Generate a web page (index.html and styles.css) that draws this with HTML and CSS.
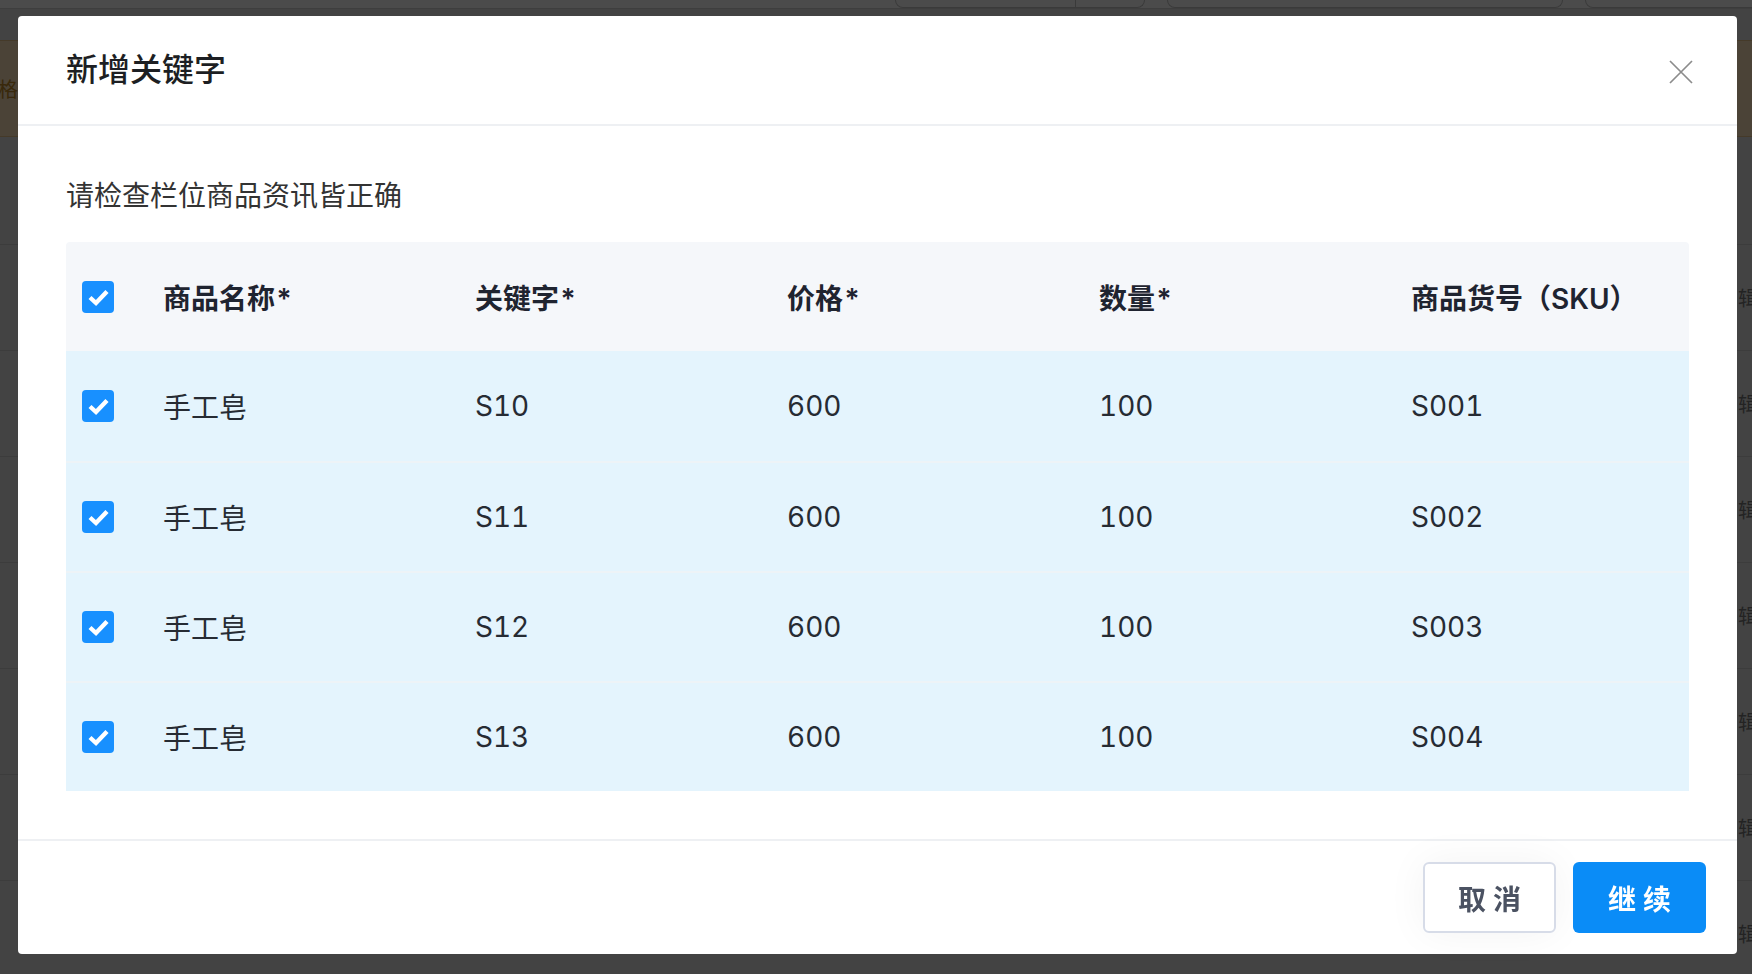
FILE: index.html
```html
<!DOCTYPE html>
<html lang="zh-CN">
<head>
<meta charset="utf-8">
<title>新增关键字</title>
<link rel="stylesheet" href="styles.css">
</head>
<body>
  <!-- page behind the dialog -->
  <div class="page">
    <div class="toolbar">
      <div class="tb-field tb-split"><span class="tb-divider"></span></div>
      <div class="tb-field tb-wide"></div>
      <div class="tb-field tb-tail"></div>
    </div>
    <div class="list">
      <div class="list-head"><span class="list-head-text">价格</span></div>
      <div class="list-sub"></div>
      <div class="list-row"><span class="row-action">编辑</span></div>
      <div class="list-row"><span class="row-action">编辑</span></div>
      <div class="list-row"><span class="row-action">编辑</span></div>
      <div class="list-row"><span class="row-action">编辑</span></div>
      <div class="list-row"><span class="row-action">编辑</span></div>
      <div class="list-row"><span class="row-action">编辑</span></div>
      <div class="list-row"><span class="row-action">编辑</span></div>
    </div>
  </div>

  <!-- dialog -->
  <div class="mask">
    <div class="modal" role="dialog" aria-labelledby="modal-title">
      <div class="modal-header">
        <h2 class="modal-title" id="modal-title">新增关键字</h2>
        <button class="modal-close" aria-label="关闭">
          <svg width="24" height="24" viewBox="0 0 24 24"><path d="M1 1 L23 23 M23 1 L1 23" stroke="#8c8c8c" stroke-width="1.7" fill="none"/></svg>
        </button>
      </div>

      <div class="modal-body">
        <p class="hint">请检查栏位商品资讯皆正确</p>

        <div class="grid-table">
          <div class="t-row t-head">
            <div class="c-check"><span class="checkbox"><svg width="32" height="32" viewBox="0 0 32 32"><rect width="32" height="32" rx="4" fill="#1890ff"/><path d="M8 16.5 L14 22 L25 10.5" stroke="#fff" stroke-width="4.4" fill="none"/></svg></span></div>
            <div class="cell">商品名称*</div>
            <div class="cell">关键字*</div>
            <div class="cell">价格*</div>
            <div class="cell">数量*</div>
            <div class="cell">商品货号（SKU）</div>
          </div>

          <div class="t-row t-item">
            <div class="c-check"><span class="checkbox"><svg width="32" height="32" viewBox="0 0 32 32"><rect width="32" height="32" rx="4" fill="#1890ff"/><path d="M8 16.5 L14 22 L25 10.5" stroke="#fff" stroke-width="4.4" fill="none"/></svg></span></div>
            <div class="cell">手工皂</div>
            <div class="cell">S10</div>
            <div class="cell">600</div>
            <div class="cell">100</div>
            <div class="cell">S001</div>
          </div>

          <div class="t-row t-item">
            <div class="c-check"><span class="checkbox"><svg width="32" height="32" viewBox="0 0 32 32"><rect width="32" height="32" rx="4" fill="#1890ff"/><path d="M8 16.5 L14 22 L25 10.5" stroke="#fff" stroke-width="4.4" fill="none"/></svg></span></div>
            <div class="cell">手工皂</div>
            <div class="cell">S11</div>
            <div class="cell">600</div>
            <div class="cell">100</div>
            <div class="cell">S002</div>
          </div>

          <div class="t-row t-item">
            <div class="c-check"><span class="checkbox"><svg width="32" height="32" viewBox="0 0 32 32"><rect width="32" height="32" rx="4" fill="#1890ff"/><path d="M8 16.5 L14 22 L25 10.5" stroke="#fff" stroke-width="4.4" fill="none"/></svg></span></div>
            <div class="cell">手工皂</div>
            <div class="cell">S12</div>
            <div class="cell">600</div>
            <div class="cell">100</div>
            <div class="cell">S003</div>
          </div>

          <div class="t-row t-item">
            <div class="c-check"><span class="checkbox"><svg width="32" height="32" viewBox="0 0 32 32"><rect width="32" height="32" rx="4" fill="#1890ff"/><path d="M8 16.5 L14 22 L25 10.5" stroke="#fff" stroke-width="4.4" fill="none"/></svg></span></div>
            <div class="cell">手工皂</div>
            <div class="cell">S13</div>
            <div class="cell">600</div>
            <div class="cell">100</div>
            <div class="cell">S004</div>
          </div>
        </div>
      </div>

      <div class="modal-footer">
        <button class="btn btn-default">取 消</button>
        <button class="btn btn-primary">继 续</button>
      </div>
    </div>
  </div>
</body>
</html>
```

FILE: styles.css
```css
* {
  box-sizing: border-box;
}

html,
body {
  margin: 0;
  height: 100%;
}

body {
  font-family: "Inter", "Noto Sans CJK SC", sans-serif;
  background: #e3e3e3;
  overflow: hidden;
}

/* ---------- page behind the dialog ---------- */
.page {
  height: 100%;
  display: flex;
  flex-direction: column;
}

.toolbar {
  height: 9px;
  flex: none;
  background: #ffffff;
  border-bottom: 1px solid #d2d2d2;
  display: flex;
  justify-content: flex-end;
  gap: 22px;
}

.tb-field {
  height: 8px;
  border: 1px solid #c4c4c4;
  border-top: none;
  border-radius: 0 0 8px 8px;
}

.tb-split {
  width: 250px;
  display: flex;
  justify-content: flex-end;
  padding-right: 68px;
}

.tb-divider {
  border-left: 1px solid #c4c4c4;
}

.tb-wide {
  width: 396px;
}

.tb-tail {
  width: 190px;
  margin-right: -23px;
}

.list {
  margin-top: 31px;
}

.list-head {
  height: 97px;
  background: #fde3bb;
  border-top: 1px solid #eac48c;
  border-bottom: 1px solid #eac48c;
  display: flex;
  align-items: center;
  color: #c08a26;
  font-size: 20px;
}

.list-head-text {
  margin-left: -22px;
}

.list-sub {
  height: 108px;
  border-bottom: 1px solid #cdcdcd;
}

.list-row {
  height: 106px;
  border-bottom: 1px solid #cdcdcd;
  display: flex;
  align-items: center;
  justify-content: flex-end;
  font-size: 20px;
  color: #777777;
}

.row-action {
  margin-right: -6px;
}

/* ---------- dialog ---------- */
.mask {
  position: fixed;
  inset: 0;
  background: rgba(0, 0, 0, 0.705);
  display: flex;
  padding: 16px 15px 20px 18px;
}

.modal {
  flex: 1;
  background: #ffffff;
  border-radius: 4px;
  display: flex;
  flex-direction: column;
}

.modal-header {
  height: 110px;
  flex: none;
  border-bottom: 2px solid #eef0f3;
  display: flex;
  align-items: center;
  justify-content: space-between;
  padding: 0 44px 0 48px;
}

.modal-title {
  margin: 0;
  font-size: 32px;
  font-weight: 500;
  line-height: 44px;
  color: #1d1f23;
}

.modal-close {
  width: 24px;
  height: 24px;
  padding: 0;
  margin-top: 4px;
  border: none;
  background: none;
  display: flex;
}

.modal-body {
  flex: 1;
  padding: 50px 48px 48px;
}

.hint {
  margin: 0 0 26px;
  font-size: 28px;
  line-height: 40px;
  color: #333333;
}

/* ---------- product table ---------- */
.grid-table {
  border-radius: 4px 4px 0 0;
  overflow: hidden;
}

.t-row {
  display: grid;
  grid-template-columns: 97px repeat(4, 312px) 1fr;
  align-items: center;
  font-size: 28px;
  font-variant-numeric: tabular-nums;
}

.t-head {
  height: 109px;
  background: #f5f7fa;
  font-weight: 600;
  color: #1f2430;
}

.t-item {
  height: 110px;
  background: #e4f4fd;
  color: #262b33;
}

.t-item + .t-item {
  border-top: 2px solid #edf3f7;
}

.c-check {
  padding-left: 16px;
  display: flex;
}

.checkbox {
  width: 32px;
  height: 32px;
  display: block;
}

.checkbox svg {
  display: block;
}

.cell {
  white-space: nowrap;
}

/* ---------- footer ---------- */
.modal-footer {
  flex: none;
  border-top: 2px solid #eef0f3;
  padding: 21px 31px;
  display: flex;
  justify-content: flex-end;
  gap: 17px;
}

.btn {
  width: 133px;
  height: 71px;
  border-radius: 6px;
  font-family: inherit;
  font-size: 28px;
  font-weight: 600;
  cursor: pointer;
}

.btn-default {
  background: #ffffff;
  border: 2px solid #d7dce8;
  color: #4b5262;
  box-shadow: 0 0 40px rgba(0, 0, 0, 0.05);
}

.btn-primary {
  background: #0a8cf7;
  border: none;
  color: #ffffff;
}
```
